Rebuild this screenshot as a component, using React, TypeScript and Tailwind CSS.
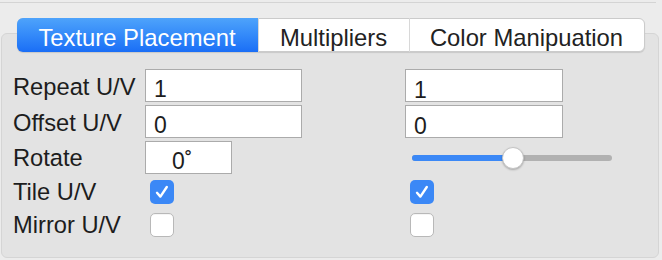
import { useState } from 'react'

const font = { fontFamily: '"Liberation Sans", Arial, sans-serif' }

function TextBox({ value, className = '' }: { value: string; className?: string }) {
    return (
        <input
            readOnly
            value={value}
            className={`h-[33px] border border-[#ababab] bg-white pt-[9px] pb-0 text-[23px] leading-none text-[#1d1d1d] outline-none ${className}`}
        />
    )
}

function Checkbox({ checked, onToggle }: { checked: boolean; onToggle: () => void }) {
    return (
        <button
            type="button"
            onClick={onToggle}
            className={`flex h-[24px] w-[24px] items-center justify-center rounded-[5px] ${checked
                ? 'bg-[#3b88f6]'
                : 'border border-[#b8b8b8] bg-white shadow-[inset_0_1px_0_rgba(0,0,0,0.04)]'
                }`}
        >
            {checked && (
                <svg width="16" height="16" viewBox="0 0 16 16" fill="none">
                    <path d="M3 8.8 L6.4 12.6 L12.8 3" stroke="white" strokeWidth="2.4" strokeLinecap="round" strokeLinejoin="round" />
                </svg>
            )}
        </button>
    )
}

export default function App() {
    const [tab, setTab] = useState(0)
    const [tile, setTile] = useState([true, true])
    const [mirror, setMirror] = useState([false, false])
    const tabs = [
        { label: 'Texture Placement', w: 'w-[241px]' },
        { label: 'Multipliers', w: 'w-[151px]' },
        { label: 'Color Manipuation', w: 'w-[235px]' },
    ]

    return (
        <div className="h-[260px] w-[662px] overflow-hidden bg-[#ececec]" style={font}>
            <div className="pt-[2px]">
                <div className="h-px w-[656px] bg-[#d4d4d4]" />
            </div>

            {/* Tab bar */}
            <div className="relative z-10 mt-[15px] flex justify-center pr-[1px]">
                <div className="flex h-[34px] rounded-[6px] border border-[#cbcbcb] bg-white shadow-[0_1px_1px_rgba(0,0,0,0.12)]">
                    {tabs.map((t, i) => (
                        <button
                            key={t.label}
                            type="button"
                            onClick={() => setTab(i)}
                            className={`${t.w} -my-px flex items-center justify-center pt-[5px] text-[23.8px] leading-none ${i === 0 ? 'rounded-l-[6px] -ml-px' : ''} ${i === 2 ? 'rounded-r-[6px]' : ''} ${i > 0 ? 'border-l border-[#d8d8d8]' : ''} ${tab === i
                                ? 'bg-gradient-to-b from-[#4ea3fb] to-[#1a6ef6] text-white'
                                : 'text-[#222]'
                                }`}
                        >
                            {t.label}
                        </button>
                    ))}
                </div>
            </div>

            {/* Group box */}
            <div className="-mt-[19px] ml-[1px] h-[225px] w-[658px] rounded-[6px] border border-[#d5d5d5] bg-[#e3e3e3] pl-[11px] pt-[35px] text-[23.7px] leading-none text-[#1d1d1d]">
                <div className="flex h-[33px] items-center">
                    <div className="w-[132px] pt-[4px]">Repeat U/V</div>
                    <div className="w-[260px]">
                        <TextBox value="1" className="w-[157px] pl-[8px]" />
                    </div>
                    <TextBox value="1" className="w-[158px] pl-[8px]" />
                </div>
                <div className="mt-[3px] flex h-[33px] items-center">
                    <div className="w-[132px] pt-[4px]">Offset U/V</div>
                    <div className="w-[260px]">
                        <TextBox value="0" className="w-[157px] pl-[8px]" />
                    </div>
                    <TextBox value="0" className="w-[158px] pl-[8px]" />
                </div>
                <div className="mt-[3px] flex h-[33px] items-center">
                    <div className="w-[132px] pt-[3px]">Rotate</div>
                    <div className="w-[260px]">
                        <TextBox value="0˚" className="w-[87px] pl-[26px]" />
                    </div>
                    <div className="relative ml-[7px] h-[22px] w-[200px]">
                        <div className="absolute left-0 right-0 top-[8px] h-[6px] rounded-full bg-[#b1b1b1]" />
                        <div className="absolute left-0 top-[8px] h-[6px] w-[101px] rounded-full bg-[#3b88f6]" />
                        <div className="absolute left-[90px] top-0 h-[22px] w-[22px] rounded-full border border-[#c4c4c4] bg-white shadow-[0_1px_2px_rgba(0,0,0,0.25)]" />
                    </div>
                </div>
                <div className="mt-[1px] flex h-[33px] items-center">
                    <div className="w-[137px] pt-[3px]">Tile U/V</div>
                    <div className="w-[260px]">
                        <Checkbox checked={tile[0]} onToggle={() => setTile([!tile[0], tile[1]])} />
                    </div>
                    <Checkbox checked={tile[1]} onToggle={() => setTile([tile[0], !tile[1]])} />
                </div>
                <div className="flex h-[33px] items-center">
                    <div className="w-[137px] pt-[3px]">Mirror U/V</div>
                    <div className="w-[260px]">
                        <Checkbox checked={mirror[0]} onToggle={() => setMirror([!mirror[0], mirror[1]])} />
                    </div>
                    <Checkbox checked={mirror[1]} onToggle={() => setMirror([mirror[0], !mirror[1]])} />
                </div>
            </div>
        </div>
    )
}
